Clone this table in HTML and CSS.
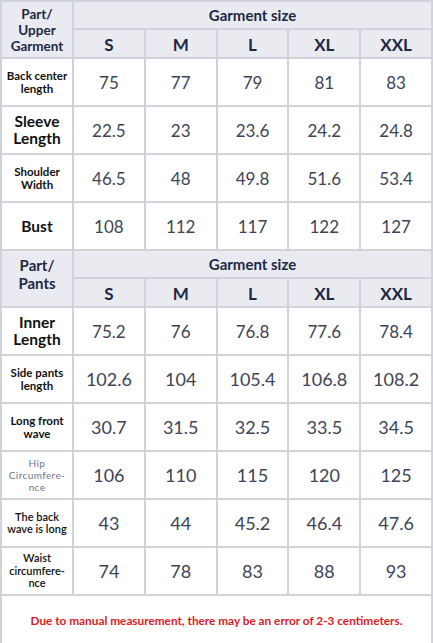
FILE: index.html
```html
<!DOCTYPE html>
<html lang="en">
<head>
    <meta charset="UTF-8">
    <meta name="viewport" content="width=device-width, initial-scale=1.0">
    <title>Size Chart</title>
    <link rel="stylesheet" href="styles.css">
</head>
<body>
    <table class="size-table">
        <colgroup>
            <col class="col-part">
            <col><col><col><col><col>
        </colgroup>
        <!-- Upper garment -->
        <tr class="head-top">
            <th class="part-head" rowspan="2">Part/<br>Upper<br>Garment</th>
            <th class="group-head" colspan="5">Garment size</th>
        </tr>
        <tr class="head-sizes">
            <th>S</th><th>M</th><th>L</th><th>XL</th><th>XXL</th>
        </tr>
        <tr class="row">
            <td class="label small">Back center<br>length</td>
            <td>75</td><td>77</td><td>79</td><td>81</td><td>83</td>
        </tr>
        <tr class="row">
            <td class="label big">Sleeve<br>Length</td>
            <td>22.5</td><td>23</td><td>23.6</td><td>24.2</td><td>24.8</td>
        </tr>
        <tr class="row">
            <td class="label small">Shoulder<br>Width</td>
            <td>46.5</td><td>48</td><td>49.8</td><td>51.6</td><td>53.4</td>
        </tr>
        <tr class="row">
            <td class="label big">Bust</td>
            <td>108</td><td>112</td><td>117</td><td>122</td><td>127</td>
        </tr>

        <!-- Pants -->
        <tr class="head-top">
            <th class="part-head pants" rowspan="2">Part/<br>Pants</th>
            <th class="group-head" colspan="5">Garment size</th>
        </tr>
        <tr class="head-sizes">
            <th>S</th><th>M</th><th>L</th><th>XL</th><th>XXL</th>
        </tr>
        <tr class="row">
            <td class="label big">Inner<br>Length</td>
            <td>75.2</td><td>76</td><td>76.8</td><td>77.6</td><td>78.4</td>
        </tr>
        <tr class="row large">
            <td class="label small">Side pants<br>length</td>
            <td>102.6</td><td>104</td><td>105.4</td><td>106.8</td><td>108.2</td>
        </tr>
        <tr class="row large">
            <td class="label small">Long front<br>wave</td>
            <td>30.7</td><td>31.5</td><td>32.5</td><td>33.5</td><td>34.5</td>
        </tr>
        <tr class="row large">
            <td class="label faint">Hip<br>Circumfere-<br>nce</td>
            <td>106</td><td>110</td><td>115</td><td>120</td><td>125</td>
        </tr>
        <tr class="row large">
            <td class="label tiny">The back<br>wave is long</td>
            <td>43</td><td>44</td><td>45.2</td><td>46.4</td><td>47.6</td>
        </tr>
        <tr class="row large">
            <td class="label tiny">Waist<br>circumfere-<br>nce</td>
            <td>74</td><td>78</td><td>83</td><td>88</td><td>93</td>
        </tr>
        <tr class="note-row">
            <td colspan="6" class="note">Due to manual measurement, there may be an error of 2-3 centimeters.</td>
        </tr>
    </table>
</body>
</html>
```

FILE: styles.css
```css
:root {
    --line: #d0d3da;
    --head-bg: #e9ebf1;
    --navy: #1d2844;
    --value: #3d4456;
    --red: #dc1a1f;
}

* {
    margin: 0;
    padding: 0;
    box-sizing: border-box;
}

body {
    background: #ffffff;
    font-family: Lato, "Liberation Sans", sans-serif;
}

.size-table {
    width: 433px;
    table-layout: fixed;
    border-collapse: collapse;
    border: 2px solid var(--line);
}

.size-table th,
.size-table td {
    border: 2px solid var(--line);
    text-align: center;
    vertical-align: middle;
    padding: 0;
}

.col-part {
    width: 72px;
}

.size-table th {
    background: var(--head-bg);
    color: var(--navy);
    font-weight: 700;
}

.head-top {
    height: 28px;
}

.head-sizes {
    height: 29px;
}

.part-head {
    font-size: 13.5px;
    line-height: 16px;
    padding-top: 1px;
}

.part-head.pants {
    font-size: 15px;
    line-height: 18px;
    vertical-align: top;
    padding-top: 5px;
}

.group-head {
    font-size: 15px;
}

.head-sizes th {
    font-size: 17px;
    padding-top: 2px;
}

.row {
    height: 48px;
}

.row td {
    font-size: 17px;
    color: var(--value);
}

.row.large td {
    font-size: 18px;
}

.row td.label {
    color: #111111;
    font-weight: 700;
}

.row td.label.big {
    font-size: 15.5px;
    line-height: 17px;
}

.row td.label.small {
    font-size: 11.5px;
    line-height: 13.5px;
}

.row td.label.tiny {
    font-size: 11px;
    line-height: 12.5px;
    font-weight: 600;
}

.row td.label.faint {
    font-size: 10px;
    line-height: 12px;
    font-weight: 400;
    color: #6b7690;
    letter-spacing: 0.4px;
}

.note-row {
    height: 50px;
}

.note {
    color: var(--red);
    font-size: 11.8px;
    font-weight: 700;
    padding-bottom: 4px;
}
```
